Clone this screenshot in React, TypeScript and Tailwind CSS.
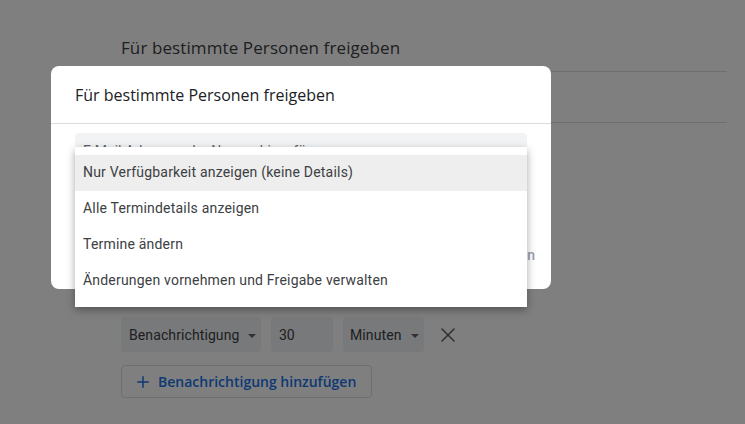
import { X, Plus } from "lucide-react";

const Caret = () => (
  <svg width="8" height="4" viewBox="0 0 10 5" className="ml-[9px]">
    <path d="M0 0 L5 5 L10 0 Z" fill="#5f6368" />
  </svg>
);

const menuItems = [
  "Nur Verfügbarkeit anzeigen (keine Details)",
  "Alle Termindetails anzeigen",
  "Termine ändern",
  "Änderungen vornehmen und Freigabe verwalten",
];

export default function App() {
  return (
    <div className="relative h-[424px] w-[745px] overflow-hidden bg-white font-['Roboto',sans-serif]">
      {/* page behind the dialog */}
      <div className="ml-[121px] w-[606px]">
        <div className="flex h-[72px] items-end border-b border-[#dadce0] pb-[11px]">
          <h2 className="font-['Open_Sans',sans-serif] text-[17px] leading-6 tracking-[0.1px] text-[#3c4043]">
            Für bestimmte Personen freigeben
          </h2>
        </div>
        <div className="h-[51px] border-b border-[#dadce0]" />
        <div className="h-[194px]" />
        <div className="flex items-center gap-[10px]">
          <div className="flex h-[35px] w-[140px] items-center rounded bg-[#f1f3f4] pl-2 pt-[2px] text-[14px] tracking-[0.1px] text-[#3c4043]">
            Benachrichtigung
            <Caret />
          </div>
          <div className="flex h-[35px] w-[62px] items-center rounded bg-[#f1f3f4] pl-2 pt-[2px] text-[14px] text-[#3c4043]">
            30
          </div>
          <div className="flex h-[35px] w-[81px] items-center rounded bg-[#f1f3f4] pl-[7px] pt-[2px] text-[14px] tracking-[0.1px] text-[#3c4043]">
            Minuten
            <Caret />
          </div>
          <X className="ml-[2px] h-6 w-6 text-[#5f6368]" strokeWidth={1.6} />
        </div>
        <div className="mt-[13px] flex h-[33px] w-[251px] items-center gap-[6px] rounded border border-[#dadce0] pl-[12px] font-['Open_Sans',sans-serif] text-[14px] font-semibold text-[#1a73e8]">
          <Plus className="h-[18px] w-[18px]" strokeWidth={2} />
          Benachrichtigung hinzufügen
        </div>
      </div>

      {/* scrim */}
      <div className="absolute inset-0 bg-black/50" />

      {/* dialog */}
      <div className="absolute left-[51px] top-[66px] h-[223px] w-[500px] rounded-lg bg-white">
        <div className="h-[58px] border-b border-[#dadce0] px-6 pt-[19px]">
          <div className="font-['Open_Sans',sans-serif] text-[16px] font-medium leading-5 text-[#202124]">
            Für bestimmte Personen freigeben
          </div>
        </div>
        <div className="mx-6 mt-[9px] h-[40px] rounded-t bg-[#f1f3f4] px-2 pt-[8px] text-[14px] text-[#5f6368]">
          E-Mail-Adresse oder Namen hinzufügen
        </div>
        <div className="mr-[16px] mt-[72px] text-right text-[14px] font-medium text-[#9aa0a6]">
          Abbrechen
        </div>
      </div>

      {/* dropdown menu */}
      <div className="absolute left-[75px] top-[147px] w-[452px] bg-white py-2 shadow-[0_3px_8px_rgba(0,0,0,0.35)]">
        {menuItems.map((item, i) => (
          <div
            key={item}
            className={`flex h-9 items-center px-2 pb-[2px] text-[14px] tracking-[0.2px] text-[#3c4043] ${i === 0 ? "bg-[#eeeeee]" : ""}`}
          >
            {item}
          </div>
        ))}
      </div>
    </div>
  );
}
